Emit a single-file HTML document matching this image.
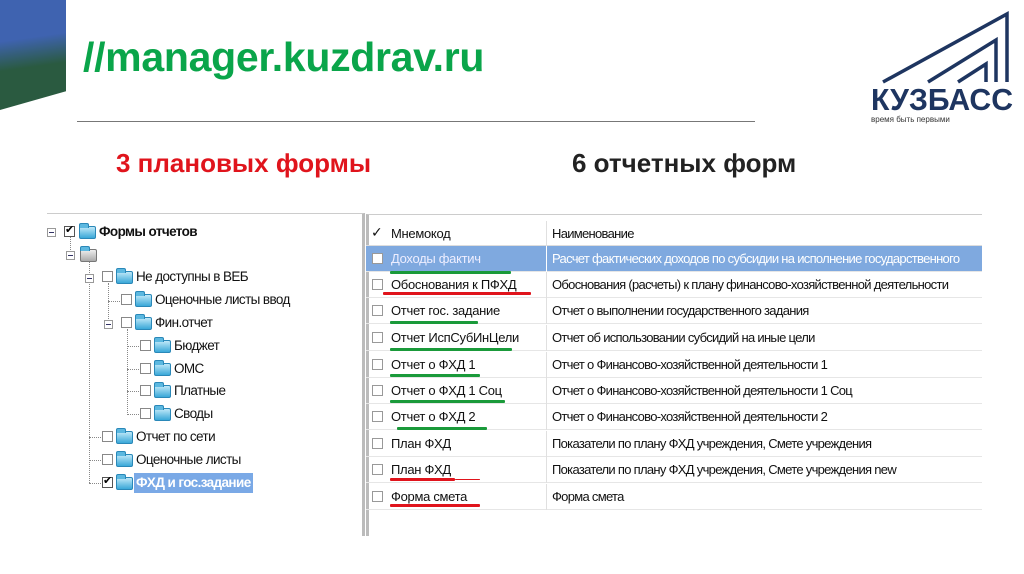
<!DOCTYPE html>
<html><head><meta charset="utf-8"><style>
*{margin:0;padding:0;box-sizing:border-box}
body{width:1024px;height:574px;background:#fff;position:relative;overflow:hidden;font-family:"Liberation Sans","DejaVu Sans",sans-serif}
.a{position:absolute;white-space:nowrap}
.t{font-size:13.5px;color:#111;height:20px;line-height:20px;letter-spacing:-0.6px}
.cb{position:absolute;width:11px;height:11px;border:1px solid #888;background:#fff}
.fo{position:absolute;width:17px;height:13px;border-radius:2px;background:linear-gradient(#bfe8f8,#3aa8d8);border:1px solid #2a88b8}
.fo:before{content:"";position:absolute;left:-1px;top:-4px;width:8px;height:4px;background:#5cb8e0;border:1px solid #2a88b8;border-bottom:none;border-radius:2px 2px 0 0}
.ln{position:absolute;border-left:1px dotted #888}
.hl{position:absolute;border-top:1px dotted #888}
.pm{position:absolute;width:9px;height:9px;border:1px solid #999;background:#fff}
.pm:after{content:"";position:absolute;left:1px;top:3px;width:5px;height:1px;background:#336}
.row{position:absolute;left:366px;width:616px;height:26px;border-bottom:1px solid #e6e6e6;font-size:13px;line-height:26px;color:#111;white-space:nowrap}
.row .c{position:absolute;left:6px;top:7px;width:11px;height:11px;border:1px solid #999;background:#fff}
.row .m{position:absolute;left:25px;letter-spacing:-0.3px}
.row .n{position:absolute;left:180px;width:436px;overflow:hidden;border-left:1px solid #e0e0e0;padding-left:5px;letter-spacing:-0.7px;white-space:nowrap}
.u{position:absolute;height:3px;border-radius:1px}
.g{background:#1a9a3a}.r{background:#e0141c}
</style></head><body>
<div class="a" style="left:0;top:0;width:66px;height:110px;background:linear-gradient(172deg,#3f63b0 0%,#3f63b0 35%,#2a5a40 60%,#2a5a40 100%);clip-path:polygon(0 0,100% 0,100% 83%,0 100%)"></div>
<div class="a" style="left:83px;top:34px;font-size:41px;font-weight:bold;color:#0aa54a;letter-spacing:-0.3px">//manager.kuzdrav.ru</div>
<div class="a" style="left:77px;top:121px;width:678px;height:1px;background:#777"></div>
<svg class="a" style="left:868px;top:10px" width="150" height="115" viewBox="0 0 150 115">
<g fill="none" stroke="#1e3560" stroke-width="3.5">
<path d="M15 72 L139 4 L139 72"/><path d="M60 72 L128 30 L128 72"/><path d="M90 72 L118 54 L118 72"/>
</g>
<text x="3" y="100" font-family="Liberation Sans" font-size="31" font-weight="bold" fill="#1e3560" textLength="142" lengthAdjust="spacingAndGlyphs">КУЗБАСС</text>
<text x="3" y="112" font-family="Liberation Sans" font-size="8" fill="#333">время быть первыми</text>
</svg>
<div class="a" style="left:116px;top:148px;font-size:26px;font-weight:bold;color:#e0141c">3 плановых формы</div>
<div class="a" style="left:572px;top:148px;font-size:26px;font-weight:bold;color:#222">6 отчетных форм</div>

<div class="a" style="left:47px;top:213px;width:318px;height:323px;border-top:1px solid #ccc;border-right:3px solid #bbb"></div>
<div class="ln" style="left:70px;top:236px;height:20px"></div>
<div class="ln" style="left:89px;top:260px;height:223px"></div>
<div class="ln" style="left:108px;top:283px;height:42px"></div>
<div class="ln" style="left:127px;top:329px;height:86px"></div>
<div class="hl" style="left:89px;top:437px;width:12px"></div>
<div class="hl" style="left:89px;top:460px;width:12px"></div>
<div class="hl" style="left:89px;top:483px;width:12px"></div>
<div class="hl" style="left:108px;top:301px;width:12px"></div>
<div class="hl" style="left:127px;top:346px;width:12px"></div>
<div class="hl" style="left:127px;top:369px;width:12px"></div>
<div class="hl" style="left:127px;top:391px;width:12px"></div>
<div class="hl" style="left:127px;top:414px;width:12px"></div>
<div class="pm" style="left:47px;top:228px"></div>
<div class="pm" style="left:66px;top:251px"></div>
<div class="pm" style="left:85px;top:274px"></div>
<div class="pm" style="left:104px;top:320px"></div>

<div class="cb" style="left:64px;top:226px;border-color:#555"><span style="position:absolute;left:0;top:-4px;font-size:11px;font-weight:bold">✔</span></div>
<div class="fo" style="left:79px;top:226px"></div>
<div class="a t" style="left:99px;top:222px;font-weight:bold">Формы отчетов</div>
<div class="fo" style="left:80px;top:249px;background:linear-gradient(#eee,#aaa);border-color:#777"></div>

<div class="cb" style="left:102px;top:271px"></div><div class="fo" style="left:116px;top:271px"></div>
<div class="a t" style="left:136px;top:267px">Не доступны в ВЕБ</div>
<div class="cb" style="left:121px;top:294px"></div><div class="fo" style="left:135px;top:294px"></div>
<div class="a t" style="left:155px;top:290px">Оценочные листы ввод</div>
<div class="cb" style="left:121px;top:317px"></div><div class="fo" style="left:135px;top:317px"></div>
<div class="a t" style="left:155px;top:313px">Фин.отчет</div>
<div class="cb" style="left:140px;top:340px"></div><div class="fo" style="left:154px;top:340px"></div>
<div class="a t" style="left:174px;top:336px">Бюджет</div>
<div class="cb" style="left:140px;top:363px"></div><div class="fo" style="left:154px;top:363px"></div>
<div class="a t" style="left:174px;top:359px">ОМС</div>
<div class="cb" style="left:140px;top:385px"></div><div class="fo" style="left:154px;top:385px"></div>
<div class="a t" style="left:174px;top:381px">Платные</div>
<div class="cb" style="left:140px;top:408px"></div><div class="fo" style="left:154px;top:408px"></div>
<div class="a t" style="left:174px;top:404px">Своды</div>
<div class="cb" style="left:102px;top:431px"></div><div class="fo" style="left:116px;top:431px"></div>
<div class="a t" style="left:136px;top:427px">Отчет по сети</div>
<div class="cb" style="left:102px;top:454px"></div><div class="fo" style="left:116px;top:454px"></div>
<div class="a t" style="left:136px;top:450px">Оценочные листы</div>
<div class="cb" style="left:102px;top:477px;border-color:#555"><span style="position:absolute;left:0;top:-4px;font-size:11px;font-weight:bold">✔</span></div>
<div class="fo" style="left:116px;top:477px"></div>
<div class="a t" style="left:134px;top:473px;background:#7aa9e6;color:#fff;font-weight:bold;padding:0 2px">ФХД и гос.задание</div>

<div class="a" style="left:366px;top:214px;width:616px;height:322px;border-left:3px solid #bbb;border-top:1px solid #ccc"></div>
<div class="row" style="top:221px;height:25px;border-bottom:1px solid #ddd"><span class="a" style="left:5px;top:-2px;font-size:14px">✓</span><span class="m">Мнемокод</span><span class="n">Наименование</span></div>
<div class="row" style="top:246px;background:#7fa9df;color:#fff"><span class="c"></span><span class="m" style="color:#eef">Доходы фактич</span><span class="n" style="border-color:#fff">Расчет фактических доходов по субсидии на исполнение государственного</span></div>
<div class="row" style="top:272px"><span class="c"></span><span class="m">Обоснования к ПФХД</span><span class="n">Обоснования (расчеты) к плану финансово-хозяйственной деятельности</span></div>
<div class="row" style="top:298px"><span class="c"></span><span class="m">Отчет гос. задание</span><span class="n">Отчет о выполнении государственного задания</span></div>
<div class="row" style="top:325px"><span class="c"></span><span class="m">Отчет ИспСубИнЦели</span><span class="n">Отчет об использовании субсидий на иные цели</span></div>
<div class="row" style="top:352px"><span class="c"></span><span class="m">Отчет о ФХД 1</span><span class="n">Отчет о Финансово-хозяйственной деятельности 1</span></div>
<div class="row" style="top:378px"><span class="c"></span><span class="m">Отчет о ФХД 1 Соц</span><span class="n">Отчет о Финансово-хозяйственной деятельности 1 Соц</span></div>
<div class="row" style="top:404px"><span class="c"></span><span class="m">Отчет о ФХД 2</span><span class="n">Отчет о Финансово-хозяйственной деятельности 2</span></div>
<div class="row" style="top:431px"><span class="c"></span><span class="m">План ФХД</span><span class="n">Показатели по плану ФХД учреждения, Смете учреждения</span></div>
<div class="row" style="top:457px"><span class="c"></span><span class="m">План ФХД</span><span class="n">Показатели по плану ФХД учреждения, Смете учреждения new</span></div>
<div class="row" style="top:484px"><span class="c"></span><span class="m">Форма смета</span><span class="n">Форма смета</span></div>

<div class="u g" style="left:390px;top:271px;width:121px"></div>
<div class="u r" style="left:383px;top:292px;width:148px"></div>
<div class="u g" style="left:390px;top:321px;width:88px"></div>
<div class="u g" style="left:390px;top:348px;width:122px"></div>
<div class="u g" style="left:390px;top:374px;width:90px"></div>
<div class="u g" style="left:390px;top:400px;width:115px"></div>
<div class="u g" style="left:397px;top:427px;width:90px"></div>
<div class="u r" style="left:390px;top:478px;width:65px"></div>
<div class="u r" style="left:455px;top:479px;width:25px;height:1px"></div>
<div class="u r" style="left:390px;top:504px;width:90px"></div>
</body></html>
